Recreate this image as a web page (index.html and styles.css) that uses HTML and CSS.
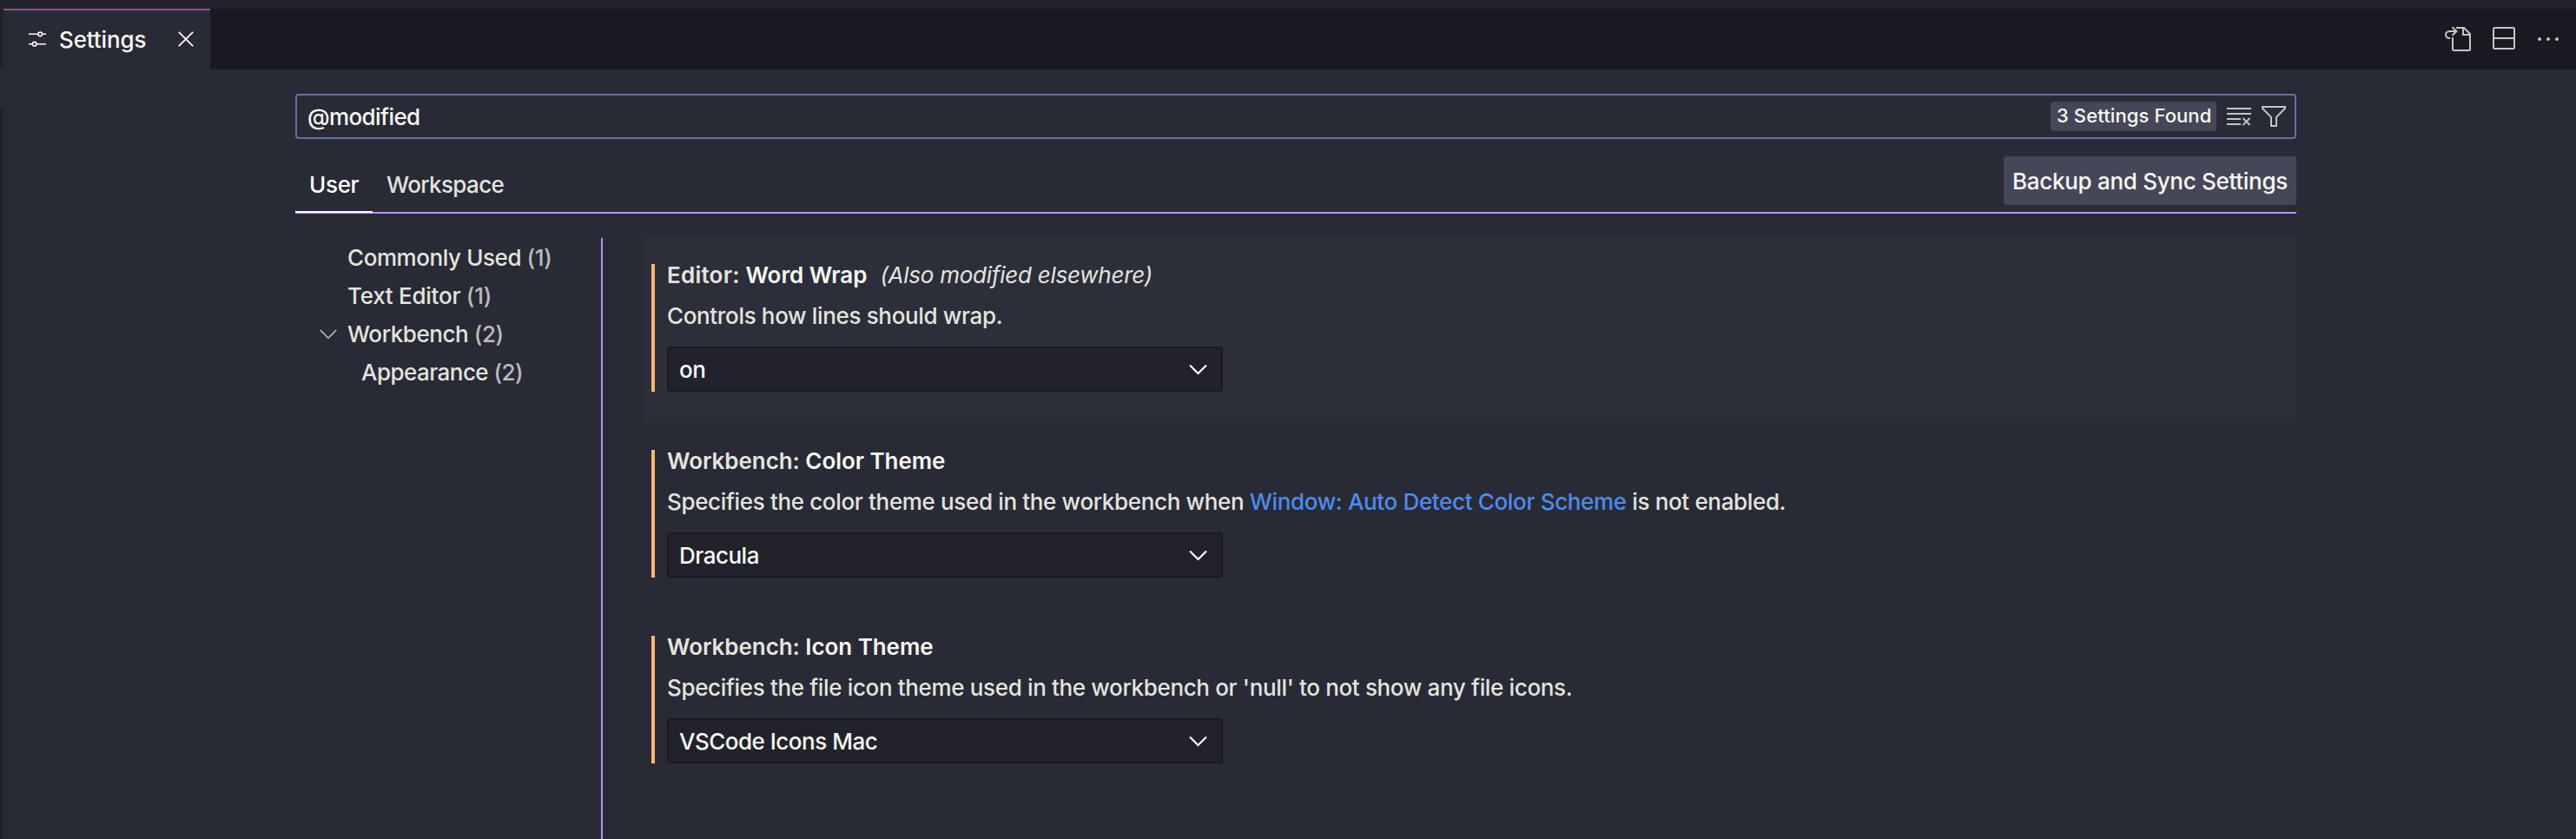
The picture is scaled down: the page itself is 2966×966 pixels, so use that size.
FILE: index.html
```html
<!DOCTYPE html>
<html lang="en">
<head>
<meta charset="utf-8">
<title>Settings</title>
<link rel="stylesheet" href="styles.css">
</head>
<body>
<header class="tabs-bar">
  <div class="tab">
    <svg class="tab-icon" width="20" height="20" viewBox="0 0 20 20"><g fill="none" stroke="currentColor" stroke-width="1.6"><path d="M0 4.3H11M15.6 4.3H20M0 15.7H4.4M9 15.7H20"/><circle cx="13.3" cy="4.3" r="2.3"/><circle cx="6.7" cy="15.7" r="2.3"/></g></svg>
    <span class="tab-label">Settings</span>
    <svg class="tab-close" width="18" height="18" viewBox="0 0 18 18"><path d="M.8.8L17.2 17.2M17.2.8L.8 17.2" stroke="currentColor" stroke-width="1.8"/></svg>
  </div>
  <div class="actions">
    <svg class="open-file" width="32" height="30" viewBox="0 0 32 30"><g fill="none" stroke="currentColor" stroke-width="2"><path d="M14 2H23L30 9V26.5Q30 28 28.5 28H11.5Q10 28 10 26.5V13"/><path d="M22 2V10H30"/><path d="M7.2 14H6.5C3.5 14 2 12 2 10S3.5 6 6.5 6H14.500M9.500 1.300L14.500 6L9.500 10.800"/></g></svg>
    <svg width="26" height="26" viewBox="0 0 26 26"><g fill="none" stroke="currentColor" stroke-width="2"><rect x="1" y="1" width="24" height="24" rx="1.500"/><path d="M1 13H25"/></g></svg>
    <svg width="24" height="4" viewBox="0 0 24 4"><g fill="currentColor"><circle cx="2" cy="2" r="2"/><circle cx="12" cy="2" r="2"/><circle cx="22" cy="2" r="2"/></g></svg>
  </div>
</header>
<main class="editor">
  <div class="gutter"></div>
  <div class="settings">
    <div class="search">
      <span class="query">@modified</span>
      <span class="count">3 Settings Found</span>
      <svg class="clear" width="28" height="22" viewBox="0 0 28 22"><g fill="none" stroke="currentColor"><path d="M0 2H28M0 8H28M0 14H16M0 20H16" stroke-width="2"/><path d="M18.500 13L26.500 21M26.500 13L18.500 21" stroke-width="1.900"/></g></svg>
      <svg class="filter" width="28" height="24" viewBox="0 0 28 24"><path d="M1 1H27V2.800L17 12.800V23H11V12.800L1 2.800Z" fill="none" stroke="currentColor" stroke-width="2"/></svg>
    </div>
    <div class="scope-bar">
      <div class="scope scope-active">User</div>
      <div class="scope">Workspace</div>
      <button class="sync">Backup and Sync Settings</button>
    </div>
    <div class="body">
      <nav class="toc">
        <div class="toc-row"><span>Commonly Used <i>(1)</i></span></div>
        <div class="toc-row toc-tight"><span>Text Editor <i>(1)</i></span></div>
        <div class="toc-row"><svg class="twistie" width="20" height="12" viewBox="0 0 20 12"><path d="M.8 1L10 10.200L19.200 1" fill="none" stroke="currentColor" stroke-width="1.600"/></svg><span>Workbench <i>(2)</i></span></div>
        <div class="toc-row toc-child"><span>Appearance <i>(2)</i></span></div>
      </nav>
      <section class="list">
        <article class="item item-focused">
          <div class="item-body">
            <h3 class="title"><span class="category category-short">Editor: </span>Word Wrap<em>(Also modified elsewhere)</em></h3>
            <p class="desc">Controls how lines should wrap.</p>
            <div class="select"><span>on</span><svg width="21" height="13" viewBox="0 0 21 13"><path d="M1 1.500L10.500 11L20 1.500" fill="none" stroke="currentColor" stroke-width="2.200"/></svg></div>
          </div>
        </article>
        <article class="item">
          <div class="item-body">
            <h3 class="title"><span class="category">Workbench: </span>Color Theme</h3>
            <p class="desc">Specifies the color theme used in the workbench when <a class="link">Window: Auto Detect Color Scheme</a> is not enabled.</p>
            <div class="select"><span>Dracula</span><svg width="21" height="13" viewBox="0 0 21 13"><path d="M1 1.500L10.500 11L20 1.500" fill="none" stroke="currentColor" stroke-width="2.200"/></svg></div>
          </div>
        </article>
        <article class="item">
          <div class="item-body">
            <h3 class="title"><span class="category">Workbench: </span>Icon Theme</h3>
            <p class="desc">Specifies the file icon theme used in the workbench or 'null' to not show any file icons.</p>
            <div class="select"><span>VSCode Icons Mac</span><svg width="21" height="13" viewBox="0 0 21 13"><path d="M1 1.500L10.500 11L20 1.500" fill="none" stroke="currentColor" stroke-width="2.200"/></svg></div>
          </div>
        </article>
      </section>
    </div>
  </div>
</main>
</body>
</html>
```
FILE: styles.css
```css
* { box-sizing: border-box; }

body {
  margin: 0;
  height: 966px;
  overflow: hidden;
  display: flex;
  flex-direction: column;
  background: #282a36;
  color: #f8f8f2;
  font: 450 26px/36px Inter, sans-serif;
  letter-spacing: -0.35px;
  white-space: nowrap;
}

svg { display: block; flex: none; }

/* Tab strip */
.tabs-bar {
  flex: none;
  height: 80px;
  border-top: 10px solid #21222c;
  border-left: 4px solid #21222c;
  background: #191a21;
  display: flex;
  justify-content: space-between;
}
.tab {
  width: 238px;
  background: #282a36;
  border-top: 2px solid #90527f;
  display: flex;
  align-items: center;
  padding: 0 19px 2px 29px;
}
.tab-label { margin-left: 15px; letter-spacing: -0.12px; padding-top: 2px; }
.tab-close { margin-left: auto; }
.actions {
  display: flex;
  align-items: center;
  gap: 24px;
  padding: 0 20px 2px 0;
  color: #c5c5c5;
}
.actions svg:last-child { margin: 2px 0 0 2px; }
.open-file { margin-top: 2px; }

/* Editor area */
.editor { flex: 1; display: flex; min-height: 0; }
.gutter { width: 4px; margin-top: 44px; background: #21222c; }
.settings {
  width: 2304px;
  margin-left: 336px;
  padding-top: 28px;
  display: flex;
  flex-direction: column;
}

.search {
  flex: none;
  height: 52px;
  border: 2px solid #6272a4;
  border-radius: 4px;
  display: flex;
  align-items: center;
  padding: 0 10px 0 12px;
}
.query { letter-spacing: -0.58px; padding-top: 2px; }
.count {
  margin-left: auto;
  height: 34px;
  border-radius: 4px;
  background: #454758;
  padding: 0 6px 0 7px;
  width: 191px;
  font-size: 22px;
  line-height: 33px;
  letter-spacing: 0.1px;
}
.clear { margin-left: 12px; color: #c2c3c5; }
.filter { margin-left: 12px; color: #c2c3c5; }

.scope-bar {
  flex: none;
  height: 86px;
  border-bottom: 2px solid #b991f6;
  display: flex;
  align-items: flex-end;
}
.scope {
  height: 65px;
  padding: 16px 0 0;
  margin-left: 16px;
  color: #e3e4df;
  letter-spacing: -0.63px;
}
.scope-active {
  width: 89px;
  height: 66px;
  padding-left: 16px;
  margin: 0 0 -1px;
  color: #fff;
  border-bottom: 2px solid #f8f8f2;
  letter-spacing: -0.3px;
}
.sync {
  margin: 0 0 8px auto;
  width: 337px;
  height: 56px;
  padding: 2px 0 0;
  border: 0;
  border-radius: 4px;
  background: #454758;
  color: #f8f8f2;
  font: inherit;
  letter-spacing: -0.3px;
}

.body { flex: 1; margin-top: 28px; display: flex; min-height: 0; }

/* Table of contents */
.toc {
  width: 354px;
  border-right: 2px solid #b991f6;
  color: #e3e4df;
}
.toc-row {
  height: 44px;
  padding: 1px 0 0 60px;
  line-height: 44px;
  display: flex;
  align-items: center;
  letter-spacing: -0.42px;
}
.toc-row i { font-style: normal; color: #bbbcbb; }
.toc-tight { letter-spacing: -0.26px; }
.twistie { margin: 0 12px 0 -32px; color: #c5c5c5; }
.toc-child { padding-left: 76px; letter-spacing: -0.54px; }

/* Setting entries */
.list { width: 1904px; margin-left: 46px; }
.item { height: 214px; padding: 30px 0 0 10px; }
.item-focused { background: linear-gradient(#2c2e3a, #2c2e3a) 0 0 / 100% 213px no-repeat; }
.item-body {
  height: 147px;
  border-left: 4px solid #f5b777;
  padding-left: 14px;
  display: flex;
  flex-direction: column;
}
.title {
  margin: 0;
  height: 28px;
  font-size: 26px;
  font-weight: 600;
  line-height: 26px;
  letter-spacing: -0.06px;
}
.category { color: #e3e4df; }
.category-short { letter-spacing: 0.22px; }
.title em { margin-left: 15px; font-weight: 450; color: #e3e4df; letter-spacing: -0.25px; }
.desc { margin: 14px 0 0; color: #e3e4df; }
.link { color: #4e8bec; }
.select {
  margin-top: auto;
  width: 640px;
  height: 52px;
  border: 2px solid #191a21;
  border-radius: 4px;
  background: #21222c;
  display: flex;
  align-items: center;
  justify-content: space-between;
  padding: 2px 16px 0 12px;
  letter-spacing: -0.5px;
}
.select svg { margin-bottom: 2px; }
```
